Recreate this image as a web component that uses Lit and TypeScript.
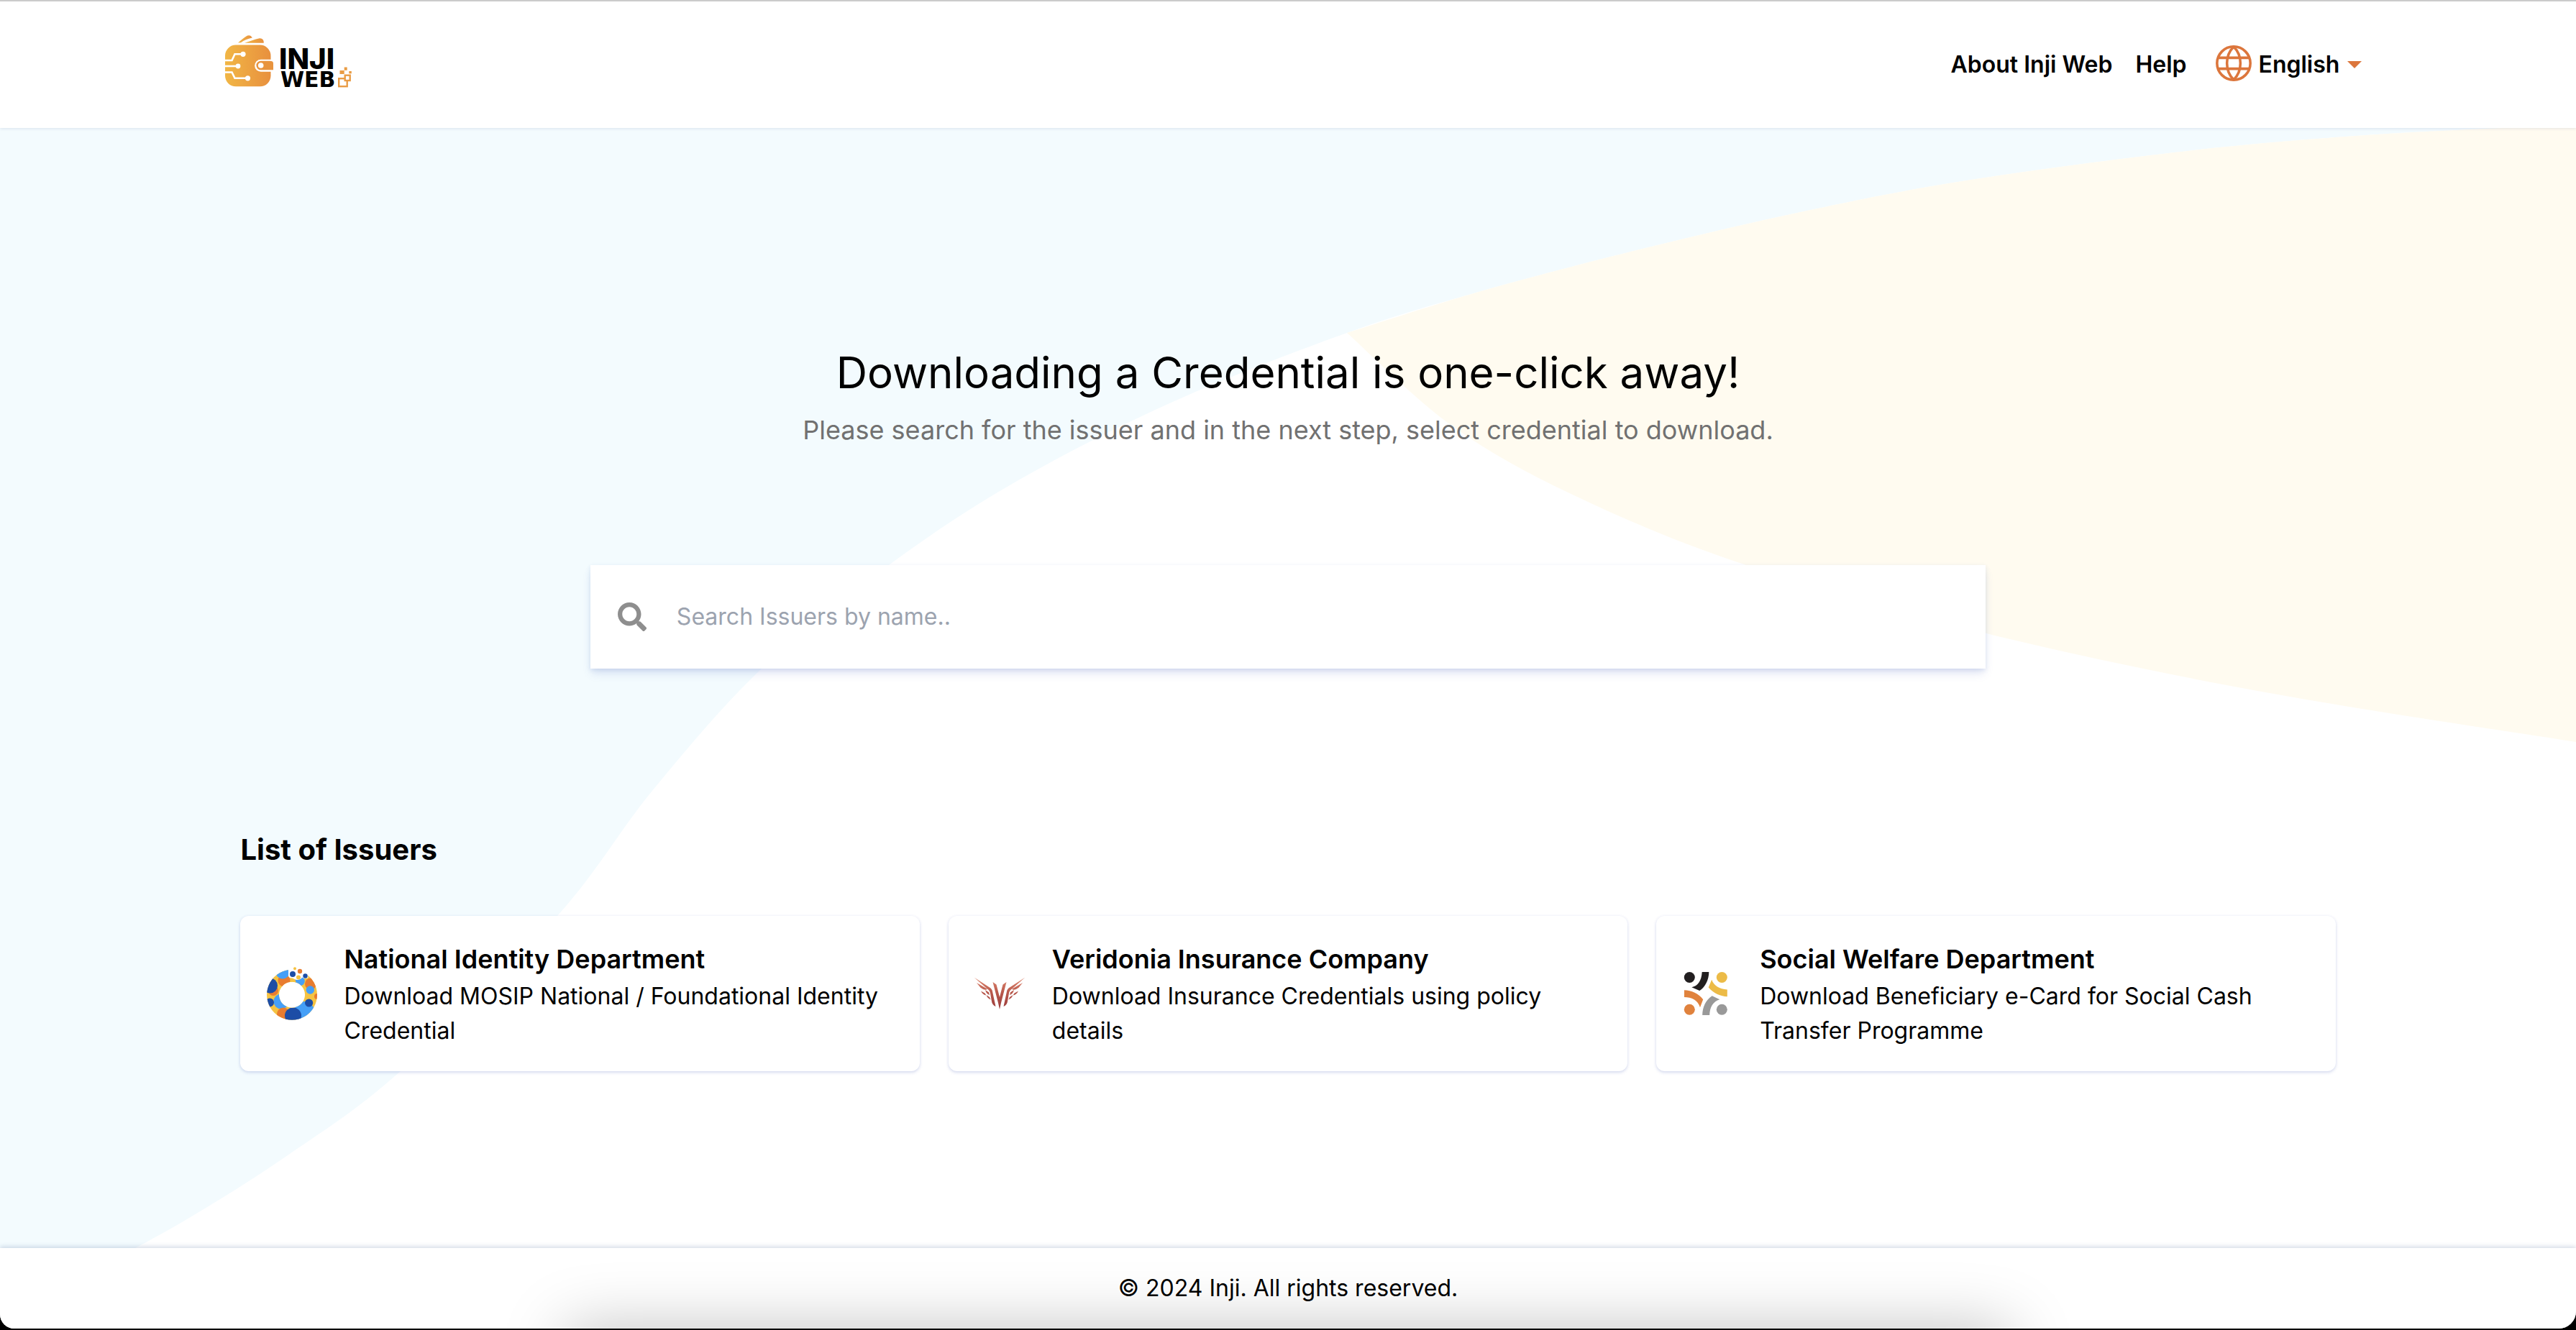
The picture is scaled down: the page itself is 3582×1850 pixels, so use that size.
import { LitElement, html, css, svg } from "lit";
import { customElement, property } from "lit/decorators.js";

type Point = [number, number];

/** Smooth cubic segments running through every point, in order. */
function curveThrough(points: Point[]): string {
  let d = "";
  for (let i = 0; i < points.length - 1; i++) {
    const p0 = points[Math.max(i - 1, 0)];
    const p1 = points[i];
    const p2 = points[i + 1];
    const p3 = points[Math.min(i + 2, points.length - 1)];
    const c1x = p1[0] + (p2[0] - p0[0]) / 6;
    const c1y = p1[1] + (p2[1] - p0[1]) / 6;
    const c2x = p2[0] - (p3[0] - p1[0]) / 6;
    const c2y = p2[1] - (p3[1] - p1[1]) / 6;
    d += ` C${c1x} ${c1y} ${c2x} ${c2y} ${p2[0]} ${p2[1]}`;
  }
  return d;
}

const ARC_UPPER: Point[] = [
  [3520, 176], [3290, 188], [3050, 209], [2741, 250], [2513, 293],
  [2284, 346], [2056, 406], [1873, 463],
];
const ARC_LOWER: Point[] = [
  [1873, 463], [1633, 558], [1416, 668], [1236, 786],
  [1058, 931], [907, 1100], [775, 1274], [557, 1490],
  [400, 1607], [253, 1700], [120, 1772],
];
const SUN_LOWER: Point[] = [
  [1873, 463], [2020, 593], [2193, 691], [2428, 786],
  [2766, 882], [3150, 963], [3582, 1032],
];

const BLUE_PATH = `M0 178 H3520 ${curveThrough([...ARC_UPPER, ...ARC_LOWER.slice(1)])} H0 Z`;
const CREAM_PATH = `M3582 176 H3520 ${curveThrough(ARC_UPPER)} ${curveThrough(SUN_LOWER)} Z`;

interface Issuer {
  icon: string;
  name: string;
  description: string;
}

const ISSUERS: Issuer[] = [
  {
    icon: "ring",
    name: "National Identity Department",
    description: "Download MOSIP National / Foundational Identity Credential",
  },
  {
    icon: "wings",
    name: "Veridonia Insurance Company",
    description: "Download Insurance Credentials using policy details",
  },
  {
    icon: "people",
    name: "Social Welfare Department",
    description: "Download Beneficiary e-Card for Social Cash Transfer Programme",
  },
];

const ringIcon = svg`
  <defs>
    <clipPath id="ring-clip">
      <path clip-rule="evenodd" d="M56 18.7a35 35 0 1 0 .01 0Z M56 35.7a18 18 0 1 1 -.01 0Z"/>
    </clipPath>
  </defs>
  <g clip-path="url(#ring-clip)">
    <rect x="16" y="12" width="80" height="80" fill="#f5c342"/>
    <circle cx="45" cy="34" r="8.5" fill="#e87c30"/>
    <circle cx="43" cy="21.500" r="10" fill="#459ff7"/>
    <circle cx="30" cy="48" r="7" fill="#e87c30"/>
    <circle cx="25.500" cy="41" r="10.500" fill="#1c4da6"/>
    <circle cx="41" cy="63" r="10.500" fill="#459ff7"/>
    <circle cx="25" cy="64.500" r="6" fill="#1c4da6"/>
    <circle cx="44" cy="80.500" r="9" fill="#e87c30"/>
    <circle cx="73" cy="77" r="14" fill="#459ff7"/>
    <circle cx="57.500" cy="83" r="11.500" fill="#1c4da6"/>
    <circle cx="79.600" cy="65" r="5.600" fill="#1c4da6"/>
    <circle cx="82" cy="38.500" r="8" fill="#e87c30"/>
    <circle cx="81.300" cy="47" r="5.700" fill="#459ff7"/>
    <circle cx="67" cy="34.500" r="6.800" fill="#459ff7"/>
    <circle cx="91" cy="56" r="4" fill="#e87c30"/>
  </g>
  <path fill="#fff" d="M51 14 V24 Q50 31 56.500 30.600 Q60 33.500 64 33 Q69 32 70 29.500 Q74 32.500 78.500 30 L76 14 Z"/>
  <path fill="#f5c342" d="M53.500 36 Q54 31.500 57.500 31.500 Q61 31.500 61.500 36.500 Q57 35 53.500 36 Z"/>
  <circle cx="57" cy="25" r="4" fill="#1c4da6"/>
  <circle cx="60" cy="17.300" r="2" fill="#f5c342"/>
  <circle cx="67" cy="21" r="3.200" fill="#e87c30"/>
  <circle cx="65" cy="29.500" r="3" fill="#f5c342"/>
  <circle cx="74.500" cy="27.500" r="3.200" fill="#1c4da6"/>
`;

const wing = svg`
  <path d="M19.500 29.500 L41 43.500 Q44.500 45.500 45 49 L49.500 70 Q44.500 68 43.800 62 L42 51.500 Q41.300 47.500 37 44.800 Z"/>
  <path d="M23 37 L38 45.800 Q34 48.200 28.500 43.800 Z"/>
  <path d="M35 47 L40 50.200 L41 54 Q36.500 52.500 35 47 Z"/>
  <path d="M29 48.500 L34.500 51.500 Q36 53.500 36 54.500 Q31.500 53.500 29 48.500 Z"/>
  <path d="M36.500 54 L41 57 L42.500 60.500 Q38 58.500 36.500 54 Z"/>
`;
const wingsIcon = svg`
  <defs>
    <linearGradient id="wings-fill" gradientUnits="userSpaceOnUse" x1="0" y1="30" x2="0" y2="74">
      <stop offset="0" stop-color="#e08a72"/>
      <stop offset="0.450" stop-color="#b9594c"/>
      <stop offset="1" stop-color="#9a3b3b"/>
    </linearGradient>
  </defs>
  <g fill="url(#wings-fill)">
    ${wing}
    <g transform="matrix(-1 0 0 1 110 0)">${wing}</g>
    <path d="M45.500 36 L50.500 39.500 L55 57 L59.500 39.500 L64.500 36 L57 65 L55 74 L53 65 Z"/>
  </g>
`;

const peopleIcon = svg`
  <circle cx="30.300" cy="29.500" r="7.500" fill="#221f20"/>
  <circle cx="75.300" cy="29.500" r="7.500" fill="#ecbb47"/>
  <circle cx="30.300" cy="74.300" r="7.500" fill="#e0823d"/>
  <circle cx="75.300" cy="74.300" r="7.500" fill="#999"/>
  <path fill="#221f20" d="M47.700 22 H57.300 C57.300 33 52 43 44.300 48 L33.300 43.300 C42 41.500 47 34 47.700 22 Z"/>
  <path fill="#ecbb47" d="M82.800 46.500 V56.200 C74 56 64 52 56.700 43.500 L61.200 32.800 C64 41 72 46 82.800 46.500 Z"/>
  <path fill="#e0823d" d="M23 47.300 V57 C33 57 42 61 45 71.300 L49.200 60.300 C43 52 33 47.500 23 47.300 Z"/>
  <path fill="#999" d="M48.200 82 H58.200 C58.500 71 63 63 72.300 60.300 L61.700 55.300 C53 61 48.200 71 48.200 82 Z"/>
`;

const ICONS: Record<string, unknown> = {
  ring: ringIcon,
  wings: wingsIcon,
  people: peopleIcon,
};

@customElement("issuer-card")
export class IssuerCard extends LitElement {
  @property({ attribute: false }) issuer!: Issuer;

  static styles = css`
    :host {
      display: block;
    }
    .card {
      display: flex;
      align-items: center;
      gap: 32px;
      height: 100%;
      box-sizing: border-box;
      padding: 32px;
      border-radius: 12px;
      background: #fff;
      box-shadow: 0 2px 4px rgba(70, 90, 180, 0.2), 0 0 4px rgba(70, 90, 180, 0.06);
      color: #000;
      text-decoration: none;
    }
    .icon {
      flex: none;
      width: 80px;
      height: 80px;
    }
    .name {
      margin: 0;
      font-size: 36px;
      line-height: 56px;
      font-weight: 600;
    }
    .description {
      margin: 0;
      font-size: 32px;
      line-height: 48px;
    }
  `;

  render() {
    return html`
      <a class="card" href="#issuer">
        <svg class="icon" viewBox="16 12 80 80" aria-hidden="true">${ICONS[this.issuer.icon]}</svg>
        <div>
          <h3 class="name">${this.issuer.name}</h3>
          <p class="description">${this.issuer.description}</p>
        </div>
      </a>
    `;
  }
}

@customElement("app-root")
export class AppRoot extends LitElement {
  static styles = css`
    :host {
      display: block;
      padding-bottom: 2px;
      background: #000;
      color: #000;
      font-family: Inter, "Liberation Sans", sans-serif;
    }
    .frame {
      display: flex;
      flex-direction: column;
      min-height: calc(100vh - 2px);
      box-sizing: border-box;
      overflow: hidden;
      border-radius: 0 0 24px 20px;
      background: #fff;
    }
    .header {
      position: relative;
      z-index: 1;
      display: flex;
      align-items: center;
      justify-content: space-between;
      padding: 0 calc(100% / 12);
      min-height: 176px;
      border-top: 2px solid #cbcbcb;
      background: #fff;
      box-shadow: 0 1px 4px rgba(40, 60, 120, 0.12);
    }
    .logo {
      display: block;
      width: 192px;
      height: 88px;
    }
    .logo-top {
      font: 800 40px Inter, sans-serif;
    }
    .logo-bottom {
      font: 700 30px "DejaVu Sans", sans-serif;
    }
    .nav {
      display: flex;
      align-items: center;
      gap: 32px;
      font-size: 32px;
      line-height: 48px;
      font-weight: 600;
    }
    .nav a {
      color: #000;
      text-decoration: none;
    }
    .language {
      display: flex;
      align-items: center;
      gap: 10px;
      padding-left: 8px;
    }
    .globe {
      width: 50px;
      height: 50px;
      padding-bottom: 4px;
    }
    .language select {
      appearance: none;
      margin: 0;
      padding: 0;
      border: 0;
      background: none;
      color: #000;
      font: inherit;
    }
    .caret {
      width: 20px;
      height: 10px;
    }
    .main {
      display: flex;
      flex: 1;
      flex-direction: column;
      position: relative;
      padding: 304px calc(100% / 12) 120px;
    }
    .backdrop {
      position: absolute;
      inset: 0;
      width: 100%;
      height: 100%;
    }
    .intro,
    .search,
    .issuers {
      position: relative;
    }
    .intro {
      text-align: center;
    }
    .title {
      margin: 0 0 16px;
      font-size: 60px;
      line-height: 72px;
      font-weight: 400;
    }
    .subtitle {
      margin: 0;
      color: #717171;
      font-size: 36px;
      line-height: 56px;
    }
    .search {
      display: flex;
      align-items: center;
      align-self: center;
      gap: 42px;
      width: 65%;
      height: 144px;
      box-sizing: border-box;
      margin-top: 160px;
      padding: 0 38px;
      background: #fff;
      box-shadow: 0 8px 12px -2px rgba(80, 100, 190, 0.18), 0 2px 6px rgba(80, 110, 190, 0.14);
    }
    .search-icon {
      flex: none;
      width: 40px;
      height: 40px;
    }
    .search input {
      flex: 1;
      min-width: 0;
      padding: 0;
      border: 0;
      outline: 0;
      background: none;
      font: 32px/48px Inter, "Liberation Sans", sans-serif;
    }
    .search input::placeholder {
      color: #9ca3af;
    }
    .issuers {
      margin-top: 224px;
      padding: 0 36px;
    }
    .heading {
      margin: 0 0 64px;
      font-size: 40px;
      line-height: 56px;
      font-weight: 700;
    }
    .grid {
      display: grid;
      grid-template-columns: repeat(3, 1fr);
      gap: 40px;
    }
    .footer {
      position: relative;
      display: flex;
      align-items: center;
      justify-content: center;
      min-height: 112px;
      background: #fff;
      box-shadow: 0 -2px 6px rgba(60, 90, 140, 0.22);
      font-size: 32px;
      line-height: 48px;
    }
    .footer::after {
      content: "";
      position: absolute;
      top: 100%;
      left: 22%;
      right: 22%;
      height: 80px;
      box-shadow: 0 0 88px rgba(0, 0, 0, 0.25);
    }
  `;

  render() {
    return html`
      <div class="frame">
        <header class="header">
          <svg class="logo" viewBox="8 16 192 88" role="img" aria-label="Inji Web">
            <defs>
              <linearGradient id="wallet" x1="0" y1="0" x2="1" y2="0">
                <stop offset="0" stop-color="#f1b645"/>
                <stop offset="1" stop-color="#e8903e"/>
              </linearGradient>
            </defs>
            <g fill="url(#wallet)">
              <path d="M41 29.500 C45 26 50 21.500 54 19.500 Q58.500 18 60.800 22.500 Q51 24.500 45 29.200 Z"/>
              <path d="M50 29.800 C57 27.500 64 24.500 71 23.200 Q77 23 76.800 29.800 Z"/>
              <rect x="23" y="32.500" width="63.500" height="57.800" rx="15"/>
            </g>
            <g fill="none" stroke="#fff" stroke-width="2.600">
              <path d="M22 54 H32.500 L36.500 45.300 H46"/>
              <path d="M22 62 H40"/>
              <path d="M22 70.500 H32.500 L36.500 78.800 H53"/>
            </g>
            <g fill="#fff">
              <circle cx="48" cy="45.300" r="3.600"/>
              <circle cx="41" cy="62" r="3.400"/>
              <circle cx="54.500" cy="78.800" r="3.600"/>
              <path d="M91 52.700 H72.700 A8.500 8.500 0 0 0 72.700 69.700 H91 Z"/>
            </g>
            <path fill="#e8943e" d="M72.700 54.700 H85 Q90 54.700 90 58 V67.300 H72.700 A6.300 6.300 0 0 1 72.700 54.700 Z"/>
            <circle cx="72.700" cy="61" r="3.800" fill="#fff"/>
            <text class="logo-top" x="98" y="65.500">INJI</text>
            <text class="logo-bottom" x="100" y="91">WEB</text>
            <g fill="none" stroke="#e99c45" stroke-width="2.400">
              <rect x="181.200" y="79.200" width="11.500" height="11"/>
              <rect x="189.700" y="74.700" width="7" height="7.300" fill="#fff"/>
            </g>
            <g fill="#e99c45">
              <rect x="182.500" y="68" width="6.200" height="5"/>
              <rect x="188.700" y="63.500" width="4" height="4.300"/>
              <rect x="195.300" y="69" width="3.500" height="3.300"/>
            </g>
          </svg>
          <nav class="nav">
            <a href="#about">About Inji Web</a>
            <a href="#help">Help</a>
            <label class="language">
              <svg class="globe" viewBox="0 0 49 49" fill="none" stroke="#dc763c" stroke-width="3.500" aria-hidden="true">
                <circle cx="24.500" cy="24.500" r="22.700"/>
                <path d="M24.500 2 C12.300 14 12.300 35 24.500 47 M24.500 2 C36.700 14 36.700 35 24.500 47 M4 17 H45 M4 32 H45"/>
              </svg>
              <select aria-label="Language">
                <option>English</option>
              </select>
              <svg class="caret" viewBox="0 0 20 10" aria-hidden="true">
                <path d="M0 0 H20 L10 10 Z" fill="#dc763c"/>
              </svg>
            </label>
          </nav>
        </header>

        <main class="main">
          <svg class="backdrop" viewBox="0 178 3582 1558" preserveAspectRatio="none" aria-hidden="true">
            <path d=${BLUE_PATH} fill="#f3fbfe"/>
            <path d=${CREAM_PATH} fill="#fffbf0"/>
          </svg>
          <section class="intro">
            <h1 class="title">Downloading a Credential is one-click away!</h1>
            <p class="subtitle">Please search for the issuer and in the next step, select credential to download.</p>
          </section>
          <label class="search">
            <svg class="search-icon" viewBox="0 0 512 512" aria-hidden="true">
              <path fill="#8e8e8e" d="M505 442.700L405.300 343c-4.500-4.500-10.600-7-17-7H372c27.600-35.300 44-79.700 44-128C416 93.100 322.900 0 208 0S0 93.100 0 208s93.100 208 208 208c48.300 0 92.700-16.400 128-44v16.300c0 6.400 2.500 12.500 7 17l99.700 99.700c9.400 9.400 24.600 9.400 33.900 0l28.300-28.300c9.400-9.400 9.400-24.600.1-34zM208 336c-70.700 0-128-57.200-128-128 0-70.700 57.200-128 128-128 70.700 0 128 57.200 128 128 0 70.700-57.200 128-128 128z"/>
            </svg>
            <input type="text" placeholder="Search Issuers by name.." aria-label="Search Issuers by name" />
          </label>
          <section class="issuers">
            <h2 class="heading">List of Issuers</h2>
            <div class="grid">
              ${ISSUERS.map((issuer) => html`<issuer-card .issuer=${issuer}></issuer-card>`)}
            </div>
          </section>
        </main>

        <footer class="footer">© 2024 Inji. All rights reserved.</footer>
      </div>
    `;
  }
}
